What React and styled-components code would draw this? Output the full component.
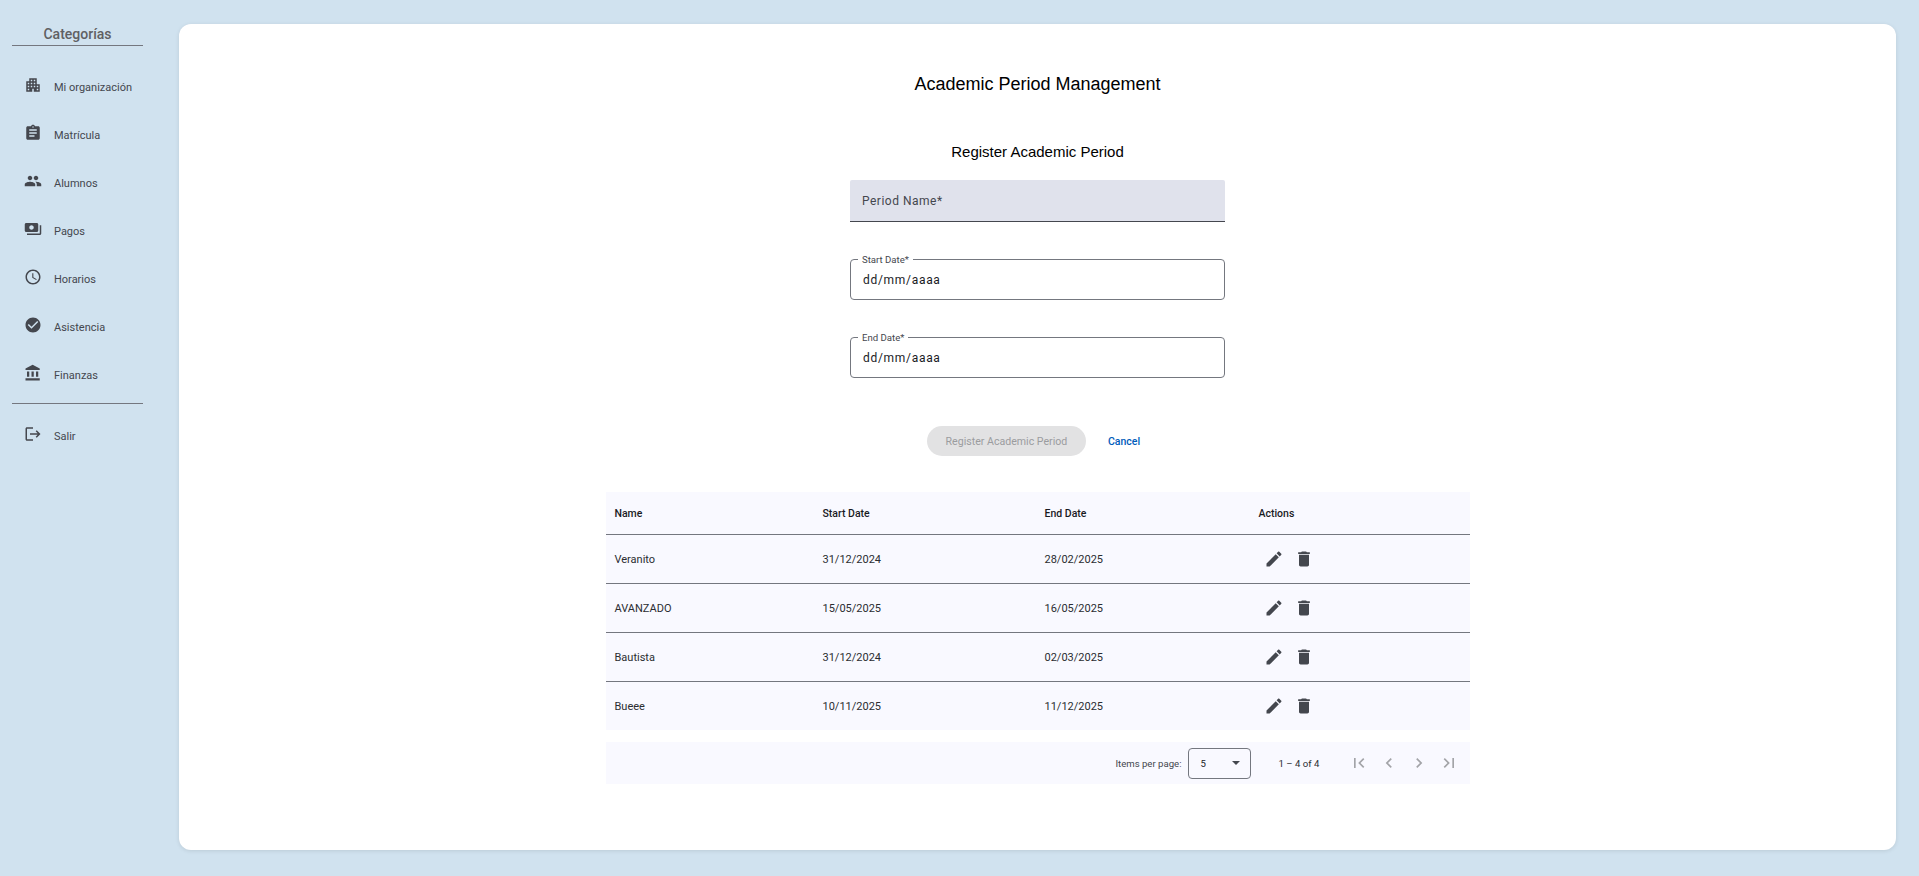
import React from "react";
import styled, { createGlobalStyle } from "styled-components";

const Global = createGlobalStyle`
  html, body { margin: 0; padding: 0; height: 100%; background: #d0e2ef; }
  body { font-family: Roboto, "Liberation Sans", sans-serif; overflow: hidden; }
  * { box-sizing: border-box; }
`;

const Page = styled.div`
  display: flex;
  width: 1919px;
  height: 876px;
  background: #d0e2ef;
`;
const Sidebar = styled.nav`
  width: 179px;
  flex: none;
  padding: 24px 36px 0 12px;
  display: flex;
  flex-direction: column;
`;
const SideTitle = styled.div`
  height: 22px;
  border-bottom: 1px solid #74777f;
  font-size: 14px;
  font-weight: 500;
  line-height: 20px;
  color: #5f6063;
  text-align: center;
`;
const SideList = styled.div`
  display: flex;
  flex-direction: column;
  padding-top: 17px;
`;
const SideItem = styled.a`
  height: 48px;
  display: flex;
  align-items: center;
  color: #44474e;
  font-size: 11px;
  padding-left: 12px;
  gap: 9px;
`;
const IconBox = styled.svg`
  width: ${(p) => p.$size || 20}px;
  height: ${(p) => p.$size || 20}px;
  fill: ${(p) => p.$color || "#44474e"};
  flex: none;
  display: block;
`;
const SideIcon = styled(IconBox)`
  width: 18px;
  height: 24px;
  margin-top: -5px;
  margin-right: 3px;
  overflow: visible;
`;
const Divider = styled.div`
  height: 1px;
  background: #74777f;
  margin-top: 4px;
  margin-bottom: 8px;
`;
const Card = styled.main`
  margin-top: 24px;
  width: 1717px;
  height: 826px;
  background: #fff;
  border-radius: 12px;
  box-shadow: 0 1px 4px rgba(0, 0, 0, 0.1);
  display: flex;
  flex-direction: column;
  align-items: center;
`;
const Title = styled.h1`
  margin: 47px 0 0;
  font: 400 18px/26px "Liberation Sans", Arial, sans-serif;
  color: #000;
`;
const SubTitle = styled.h2`
  margin: 45px 0 0;
  font: 400 15px/20px "Liberation Sans", Arial, sans-serif;
  color: #000;
`;
const FilledField = styled.div`
  margin-top: 18px;
  width: 375px;
  height: 42px;
  background: #e0e2ec;
  border-radius: 2px 2px 0 0;
  border-bottom: 1px solid #44474e;
  padding: 0 12px;
  display: flex;
  align-items: center;
  color: #44474e;
  font-size: 12px;
  letter-spacing: 0.5px;
`;
const Outlined = styled.div`
  position: relative;
  margin-top: ${(p) => p.$top}px;
  width: 375px;
  height: 41px;
  border: 1px solid #74777f;
  border-radius: 4px;
  padding: 0 12px;
  display: flex;
  align-items: center;
  color: #1a1b1f;
  font-size: 12px;
  letter-spacing: 0.7px;
`;
const FloatLabel = styled.span`
  position: absolute;
  top: -6px;
  left: 7px;
  padding: 0 4px;
  background: #fff;
  font-size: 9.6px;
  line-height: 11px;
  letter-spacing: 0;
  color: #44474e;
`;
const Actions = styled.div`
  margin-top: 48px;
  display: flex;
  align-items: center;
  margin-right: 8px;
`;
const SubmitBtn = styled.button`
  width: 159px;
  height: 30px;
  border: 0;
  border-radius: 15px;
  background: #e2e2e3;
  color: #9b9c9f;
  font: 400 10.6px Roboto, sans-serif;
  padding: 0;
`;
const CancelBtn = styled.button`
  border: 0;
  background: none;
  color: #005cbb;
  font: 500 10.5px Roboto, sans-serif;
  padding: 0;
  margin-left: 22px;
`;
const TableWrap = styled.div`
  margin-top: 36px;
  width: 864px;
  background: #f9f9ff;
`;
const Row = styled.div`
  display: grid;
  grid-template-columns: 208px 222px 214px 1fr;
  height: ${(p) => p.$h}px;
  align-items: center;
  padding-left: 9px;
  border-bottom: ${(p) => (p.$last ? "0" : "1px solid #74777f")};
  font-size: ${(p) => (p.$head ? "10.5px" : "11px")};
  font-weight: ${(p) => (p.$head ? 500 : 400)};
  color: ${(p) => (p.$head ? "#1a1b1f" : "#2b2d31")};
`;
const ActionIcons = styled.div`
  display: flex;
  gap: 10px;
  padding-left: 5px;
`;
const Paginator = styled.div`
  margin-top: 12px;
  width: 864px;
  height: 42px;
  background: #f9f9ff;
  display: flex;
  align-items: center;
  justify-content: flex-end;
  font-size: 9.6px;
  color: #44474e;
  padding-right: 11px;
`;
const PageLabel = styled.span`
  margin-right: 6px;
`;
const PageSelect = styled.div`
  width: 63px;
  height: 31px;
  border: 1px solid #74777f;
  border-radius: 4px;
  display: flex;
  align-items: center;
  justify-content: space-between;
  padding: 0 10px 0 12px;
  color: #1a1b1f;
`;
const Caret = styled.i`
  width: 0;
  height: 0;
  border-left: 4px solid transparent;
  border-right: 4px solid transparent;
  border-top: 4px solid #44474e;
`;
const RangeLabel = styled.span`
  margin: 0 30px 0 28px;
  width: 40px;
  color: #2b2d31;
  white-space: nowrap;
`;
const PageButtons = styled.div`
  display: flex;
  gap: 10px;
`;

const P = {
  org: "M17 11V3H7v4H3v14h8v-4h2v4h8V11h-4zM7 19H5v-2h2v2zm0-4H5v-2h2v2zm0-4H5V9h2v2zm4 4H9v-2h2v2zm0-4H9V9h2v2zm0-4H9V5h2v2zm4 8h-2v-2h2v2zm0-4h-2V9h2v2zm0-4h-2V5h2v2zm4 12h-2v-2h2v2zm0-4h-2v-2h2v2z",
  assign: "M19 3h-4.18C14.4 1.84 13.3 1 12 1c-1.3 0-2.4.84-2.82 2H5c-1.1 0-2 .9-2 2v14c0 1.1.9 2 2 2h14c1.1 0 2-.9 2-2V5c0-1.1-.9-2-2-2zm-7 0c.55 0 1 .45 1 1s-.45 1-1 1-1-.45-1-1 .45-1 1-1zm2 14H7v-2h7v2zm3-4H7v-2h10v2zm0-4H7V7h10v2z",
  people: "M16 11c1.66 0 2.99-1.34 2.99-3S17.66 5 16 5c-1.66 0-3 1.34-3 3s1.34 3 3 3zm-8 0c1.66 0 2.99-1.34 2.99-3S9.66 5 8 5C6.34 5 5 6.34 5 8s1.34 3 3 3zm0 2c-2.33 0-7 1.17-7 3.5V19h14v-2.5c0-2.33-4.67-3.5-7-3.5zm8 0c-.29 0-.62.02-.97.05 1.16.84 1.97 1.97 1.97 3.45V19h6v-2.5c0-2.33-4.67-3.5-7-3.5z",
  pay: "M19 14V6c0-1.1-.9-2-2-2H3c-1.1 0-2 .9-2 2v8c0 1.1.9 2 2 2h14c1.1 0 2-.9 2-2zm-9-1c-1.66 0-3-1.34-3-3s1.34-3 3-3 3 1.34 3 3-1.34 3-3 3zm13-6v11c0 1.1-.9 2-2 2H4v-2h17V7h2z",
  clock: "M11.99 2C6.47 2 2 6.48 2 12s4.47 10 9.99 10C17.52 22 22 17.52 22 12S17.52 2 11.99 2zM12 20c-4.42 0-8-3.58-8-8s3.58-8 8-8 8 3.58 8 8-3.58 8-8 8zm.5-13H11v6l5.25 3.15.75-1.23-4.5-2.67z",
  check: "M12 2C6.48 2 2 6.48 2 12s4.48 10 10 10 10-4.48 10-10S17.52 2 12 2zm-2 15l-5-5 1.41-1.41L10 14.17l7.59-7.59L19 8l-9 9z",
  bank: "M4 10v7h3v-7H4zm6 0v7h3v-7h-3zM2 22h19v-3H2v3zm14-12v7h3v-7h-3zm-4.5-9L2 6v2h19V6l-9.5-5z",
  logout: "M17 7l-1.41 1.41L18.17 11H8v2h10.17l-2.58 2.58L17 17l5-5zM4 5h8V3H4c-1.1 0-2 .9-2 2v14c0 1.1.9 2 2 2h8v-2H4V5z",
  edit: "M3 17.25V21h3.75L17.81 9.94l-3.75-3.75L3 17.25zM20.71 7.04c.39-.39.39-1.02 0-1.41l-2.34-2.34c-.39-.39-1.02-.39-1.41 0l-1.83 1.83 3.75 3.75 1.83-1.83z",
  del: "M6 19c0 1.1.9 2 2 2h8c1.1 0 2-.9 2-2V7H6v12zM19 4h-3.5l-1-1h-5l-1 1H5v2h14V4z",
  first: "M18.41 16.59L13.82 12l4.59-4.59L17 6l-6 6 6 6zM6 6h2v12H6z",
  prev: "M15.41 7.41L14 6l-6 6 6 6 1.41-1.41L10.83 12z",
  next: "M10 6L8.59 7.41 13.17 12l-4.58 4.59L10 18l6-6z",
  last: "M5.59 7.41L10.18 12l-4.59 4.59L7 18l6-6-6-6zM16 6h2v12h-2z",
};

const Icon = ({ d, size, color }) => (
  <IconBox viewBox="0 0 24 24" $size={size} $color={color}><path d={d} /></IconBox>
);
const NavIcon = ({ d }) => (
  <SideIcon viewBox="0 0 24 24"><path d={d} /></SideIcon>
);

const nav = [
  ["Mi organización", P.org],
  ["Matrícula", P.assign],
  ["Alumnos", P.people],
  ["Pagos", P.pay],
  ["Horarios", P.clock],
  ["Asistencia", P.check],
  ["Finanzas", P.bank],
];
const rows = [
  ["Veranito", "31/12/2024", "28/02/2025"],
  ["AVANZADO", "15/05/2025", "16/05/2025"],
  ["Bautista", "31/12/2024", "02/03/2025"],
  ["Bueee", "10/11/2025", "11/12/2025"],
];

export default function App() {
  return (
    <Page>
      <Global />
      <Sidebar>
        <SideTitle>Categorías</SideTitle>
        <SideList>
          {nav.map(([t, d]) => (
            <SideItem key={t}><NavIcon d={d} />{t}</SideItem>
          ))}
          <Divider />
          <SideItem><NavIcon d={P.logout} />Salir</SideItem>
        </SideList>
      </Sidebar>
      <Card>
        <Title>Academic Period Management</Title>
        <SubTitle>Register Academic Period</SubTitle>
        <FilledField>Period Name*</FilledField>
        <Outlined $top={37}><FloatLabel>Start Date*</FloatLabel>dd/mm/aaaa</Outlined>
        <Outlined $top={37}><FloatLabel>End Date*</FloatLabel>dd/mm/aaaa</Outlined>
        <Actions>
          <SubmitBtn disabled>Register Academic Period</SubmitBtn>
          <CancelBtn>Cancel</CancelBtn>
        </Actions>
        <TableWrap>
          <Row $h={43} $head>
            <span>Name</span><span>Start Date</span><span>End Date</span><span>Actions</span>
          </Row>
          {rows.map((r, i) => (
            <Row key={r[0]} $h={i === rows.length - 1 ? 48 : 49} $last={i === rows.length - 1}>
              <span>{r[0]}</span><span>{r[1]}</span><span>{r[2]}</span>
              <ActionIcons>
                <Icon d={P.edit} size={20} />
                <Icon d={P.del} size={20} />
              </ActionIcons>
            </Row>
          ))}
        </TableWrap>
        <Paginator>
          <PageLabel>Items per page:</PageLabel>
          <PageSelect>5<Caret /></PageSelect>
          <RangeLabel>1 – 4 of 4</RangeLabel>
          <PageButtons>
            <Icon d={P.first} color="#a3a4a8" />
            <Icon d={P.prev} color="#a3a4a8" />
            <Icon d={P.next} color="#a3a4a8" />
            <Icon d={P.last} color="#a3a4a8" />
          </PageButtons>
        </Paginator>
      </Card>
    </Page>
  );
}
